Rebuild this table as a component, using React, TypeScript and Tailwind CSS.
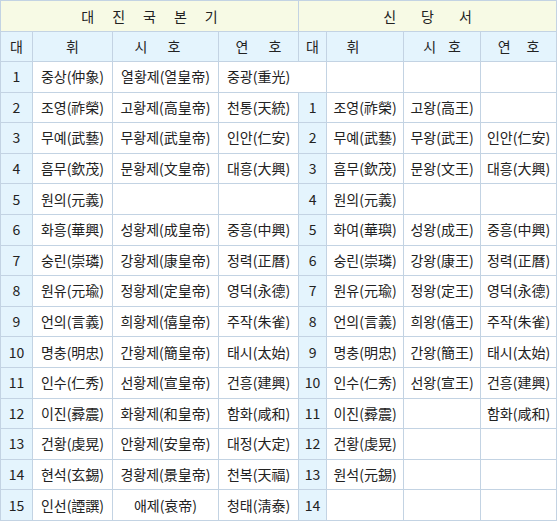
const left: [string, string, string][] = [
  ['중상(仲象)', '열황제(열皇帝)', '중광(重光)'],
  ['조영(祚榮)', '고황제(高皇帝)', '천통(天統)'],
  ['무예(武藝)', '무황제(武皇帝)', '인안(仁安)'],
  ['흠무(欽茂)', '문황제(文皇帝)', '대흥(大興)'],
  ['원의(元義)', '', ''],
  ['화흥(華興)', '성황제(成皇帝)', '중흥(中興)'],
  ['숭린(崇璘)', '강황제(康皇帝)', '정력(正曆)'],
  ['원유(元瑜)', '정황제(定皇帝)', '영덕(永德)'],
  ['언의(言義)', '희황제(僖皇帝)', '주작(朱雀)'],
  ['명충(明忠)', '간황제(簡皇帝)', '태시(太始)'],
  ['인수(仁秀)', '선황제(宣皇帝)', '건흥(建興)'],
  ['이진(彛震)', '화황제(和皇帝)', '함화(咸和)'],
  ['건황(虔晃)', '안황제(安皇帝)', '대정(大定)'],
  ['현석(玄錫)', '경황제(景皇帝)', '천복(天福)'],
  ['인선(諲譔)', '애제(哀帝)', '청태(淸泰)'],
]

// right half starts one row lower; first row is merged into the left side
const right: [string, string, string][] = [
  ['조영(祚榮)', '고왕(高王)', ''],
  ['무예(武藝)', '무왕(武王)', '인안(仁安)'],
  ['흠무(欽茂)', '문왕(文王)', '대흥(大興)'],
  ['원의(元義)', '', ''],
  ['화여(華璵)', '성왕(成王)', '중흥(中興)'],
  ['숭린(崇璘)', '강왕(康王)', '정력(正曆)'],
  ['원유(元瑜)', '정왕(定王)', '영덕(永德)'],
  ['언의(言義)', '희왕(僖王)', '주작(朱雀)'],
  ['명충(明忠)', '간왕(簡王)', '태시(太始)'],
  ['인수(仁秀)', '선왕(宣王)', '건흥(建興)'],
  ['이진(彛震)', '', '함화(咸和)'],
  ['건황(虔晃)', '', ''],
  ['원석(元錫)', '', ''],
  ['', '', ''],
]

const cell = 'border border-[#c3d3e3] p-0 text-center align-middle whitespace-nowrap'
const num = `${cell} bg-[#e4f4fd]`

function Spaced({ text, gap }: { text: string; gap: string }) {
  return (
    <span className={`inline-flex justify-center ${gap}`}>
      {text.split('').map((c, i) => (
        <span key={i}>{c}</span>
      ))}
    </span>
  )
}

export default function App() {
  return (
    <div className="bg-white w-[558px] h-[522px]">
      <table
        className="table-fixed border-collapse w-[557px] text-[14px] text-[#222] border border-[#5582b0] border-t-[#c3d3e3]"
        style={{ fontFamily: '"Noto Sans CJK KR", "Noto Sans", sans-serif' }}
      >
        <colgroup>
          <col className="w-[32px]" />
          <col className="w-[80px]" />
          <col className="w-[106px]" />
          <col className="w-[80px]" />
          <col className="w-[28px]" />
          <col className="w-[77px]" />
          <col className="w-[77px]" />
          <col className="w-[76px]" />
        </colgroup>
        <tbody>
          <tr className="h-[31px] bg-[#f7fae5]">
            <td colSpan={4} className={cell}>
              <Spaced text="대진국본기" gap="gap-[18px]" />
            </td>
            <td colSpan={4} className={cell}>
              <Spaced text="신당서" gap="gap-[25px]" />
            </td>
          </tr>
          <tr className="h-[30px] bg-[#e4f4fd]">
            <td className={cell}>대</td>
            <td className={cell}>휘</td>
            <td className={`${cell} pr-[16px]`}>
              <Spaced text="시호" gap="gap-[20px]" />
            </td>
            <td className={cell}>
              <Spaced text="연호" gap="gap-[20px]" />
            </td>
            <td className={cell}>대</td>
            <td className={`${cell} pr-[24px]`}>휘</td>
            <td className={cell}>
              <Spaced text="시호" gap="gap-[12px]" />
            </td>
            <td className={cell}>
              <Spaced text="연호" gap="gap-[16px]" />
            </td>
          </tr>
          {left.map((row, i) => {
            const r = i === 0 ? null : right[i - 1]
            return (
              <tr key={i} className="h-[30.6px]">
                <td className={num}>{i + 1}</td>
                <td className={cell}>{row[0]}</td>
                <td className={cell}>{row[1]}</td>
                {r ? (
                  <>
                    <td className={cell}>{row[2]}</td>
                    <td className={num}>{i}</td>
                    <td className={cell}>{r[0]}</td>
                    <td className={cell}>{r[1]}</td>
                    <td className={cell}>{r[2]}</td>
                  </>
                ) : (
                  <>
                    <td colSpan={2} className={`${cell} pr-[28px]`}>{row[2]}</td>
                    <td className={cell}></td>
                    <td className={cell}></td>
                    <td className={cell}></td>
                  </>
                )}
              </tr>
            )
          })}
        </tbody>
      </table>
    </div>
  )
}
